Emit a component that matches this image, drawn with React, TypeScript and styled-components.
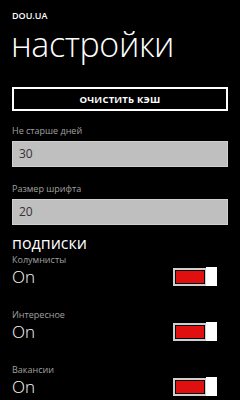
import React from "react";
import styled, { createGlobalStyle } from "styled-components";

const Global = createGlobalStyle`
  html, body { margin: 0; padding: 0; background: #000; }
  body { font-family: "Open Sans", "Noto Sans", sans-serif; color: #fff; }
`;

const Page = styled.div`
  width: 240px;
  height: 400px;
  overflow: hidden;
  background: #000;
  padding: 0 12px;
  box-sizing: border-box;
`;

const AppName = styled.div`
  padding-top: 11px;
  font-size: 9px;
  line-height: 10px;
  font-weight: 600;
  color: #fff;
`;

const Title = styled.h1`
  margin: 0;
  margin-top: 1px;
  margin-left: -1px;
  font-size: 34px;
  line-height: 44px;
  font-weight: 300;
  letter-spacing: -0.4px;
  color: #fff;
`;

const Button = styled.button`
  display: block;
  width: 216px;
  height: 24px;
  margin-top: 21px;
  background: transparent;
  border: 2px solid #fff;
  color: #fff;
  font-family: "Open Sans", sans-serif;
  font-size: 9.5px;
  font-weight: 700;
  letter-spacing: 0.2px;
  padding: 0;
`;

const Field = styled.div<{ $top: number }>`
  margin-top: ${(p) => p.$top}px;
`;

const Label = styled.div`
  font-size: 9px;
  line-height: 12px;
  color: #a0a0a0;
`;

const Input = styled.div`
  margin-top: 4px;
  height: 26px;
  background: #bfbfbf;
  border: 1px solid #d0d0d0;
  box-sizing: border-box;
  color: #333;
  font-size: 12px;
  line-height: 24px;
  padding-left: 6px;
`;

const Section = styled.div`
  margin-top: 7px;
  font-size: 16px;
  line-height: 22px;
  font-weight: 400;
  color: #fff;
`;

const Item = styled.div<{ $top: number }>`
  display: flex;
  justify-content: space-between;
  align-items: flex-end;
  margin-top: ${(p) => p.$top}px;
`;

const ItemText = styled.div`
  display: flex;
  flex-direction: column;
`;

const ItemLabel = styled.div`
  font-size: 9px;
  line-height: 12px;
  color: #a0a0a0;
`;

const ItemValue = styled.div`
  font-size: 17px;
  line-height: 22px;
  font-weight: 300;
  color: #fff;
`;

const Toggle = styled.div`
  display: flex;
  align-items: center;
  margin-right: 11px;
  margin-bottom: 2px;
`;

const Track = styled.div`
  width: 34px;
  height: 18px;
  box-sizing: border-box;
  border: 2px solid #cfcfcf;
  padding: 1px;
  margin-right: -1px;
`;

const Fill = styled.div`
  width: 100%;
  height: 100%;
  background: #e01010;
`;

const Thumb = styled.div`
  width: 11px;
  height: 19px;
  background: #fff;
`;

const items = ["Колумнисты", "Интересное", "Вакансии"];

export default function App() {
  return (
    <>
      <Global />
      <Page>
        <AppName>DOU.UA</AppName>
        <Title>настройки</Title>
        <Button>ОЧИСТИТЬ КЭШ</Button>
        <Field $top={14}>
          <Label>Не старше дней</Label>
          <Input>30</Input>
        </Field>
        <Field $top={16}>
          <Label>Размер шрифта</Label>
          <Input>20</Input>
        </Field>
        <Section>подписки</Section>
        {items.map((t, i) => (
          <Item key={t} $top={i === 0 ? 0 : 21}>
            <ItemText>
              <ItemLabel>{t}</ItemLabel>
              <ItemValue>On</ItemValue>
            </ItemText>
            <Toggle>
              <Track>
                <Fill />
              </Track>
              <Thumb />
            </Toggle>
          </Item>
        ))}
      </Page>
    </>
  );
}
